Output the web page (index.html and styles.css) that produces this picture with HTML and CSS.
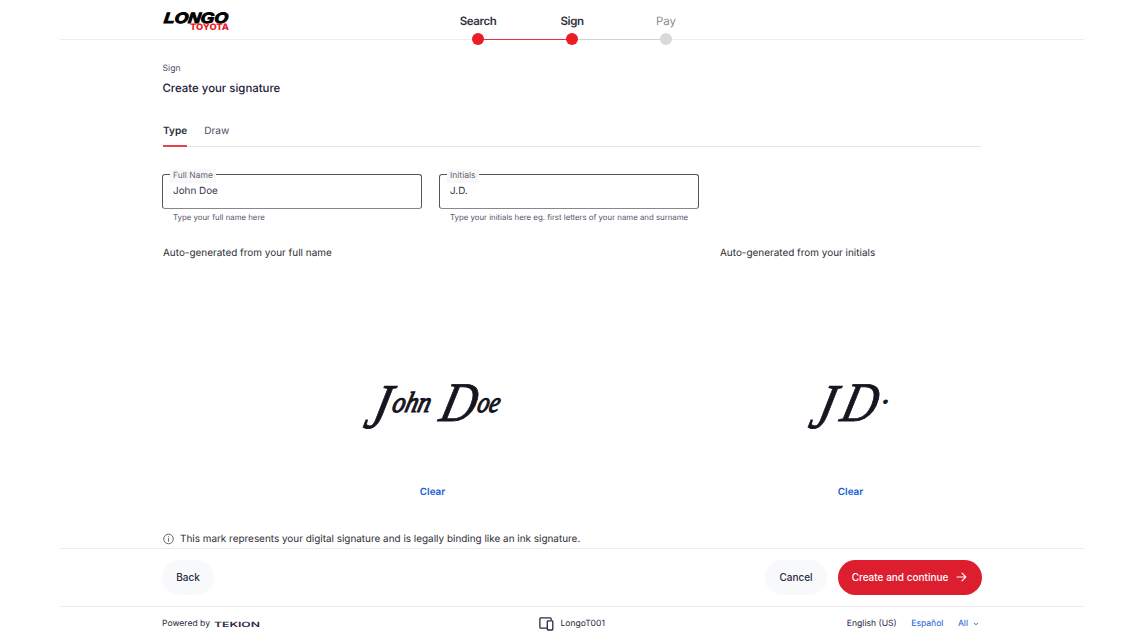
FILE: index.html
```html
<!DOCTYPE html>
<html lang="en">
<head>
<meta charset="utf-8">
<title>Create your signature</title>
<link rel="stylesheet" href="styles.css">
</head>
<body>
<div class="page">
  <header class="header">
    <svg class="brand" width="70" height="26" viewBox="0 -3 70 26" role="img" aria-label="Longo Toyota">
      <text class="brand-main" transform="translate(1.5 12.9) skewX(-6)" textLength="64" lengthAdjust="spacingAndGlyphs">LONGO</text>
      <text class="brand-sub" x="28" y="20.4" textLength="39" lengthAdjust="spacingAndGlyphs">TOYOTA</text>
    </svg>
    <ol class="steps">
      <li class="step done"><span>Search</span><i class="dot"></i></li>
      <li class="step current"><span>Sign</span><i class="dot"></i></li>
      <li class="step"><span>Pay</span><i class="dot"></i></li>
    </ol>
  </header>

  <main class="content">
    <div class="eyebrow">Sign</div>
    <h1 class="title">Create your signature</h1>
    <nav class="tabs"><a class="tab active">Type</a><a class="tab">Draw</a></nav>
    <div class="fields">
      <div class="field">
        <div class="box"><span class="label">Full Name</span><span class="value">John Doe</span></div>
        <div class="help">Type your full name here</div>
      </div>
      <div class="field">
        <div class="box"><span class="label">Initials</span><span class="value">J.D.</span></div>
        <div class="help">Type your initials here eg. first letters of your name and surname</div>
      </div>
    </div>
    <div class="previews">
      <section class="preview wide">
        <h2>Auto-generated from your full name</h2>
        <svg class="ink" width="150" height="66" viewBox="357 371 150 66">
          <g transform="translate(0 416) skewX(-14)">
            <text class="cap tall" x="364" y="12" textLength="23" lengthAdjust="spacingAndGlyphs">J</text>
            <text class="low" x="389" y="-4" textLength="38" lengthAdjust="spacingAndGlyphs">ohn</text>
            <text class="cap" x="438" y="5" textLength="35" lengthAdjust="spacingAndGlyphs">D</text>
            <text class="low" x="474" y="-4" textLength="22" lengthAdjust="spacingAndGlyphs">oe</text>
          </g>
        </svg>
        <a class="clear">Clear</a>
      </section>
      <section class="preview narrow">
        <h2>Auto-generated from your initials</h2>
        <svg class="ink" width="90" height="66" viewBox="805 371 90 66">
          <g transform="translate(0 416) skewX(-14)">
            <text class="cap tall" x="809" y="12" textLength="23" lengthAdjust="spacingAndGlyphs">J</text>
            <text class="cap" x="839" y="5" textLength="35" lengthAdjust="spacingAndGlyphs">D</text>
            <text class="low" x="878" y="-13">.</text>
          </g>
        </svg>
        <a class="clear">Clear</a>
      </section>
    </div>
    <div class="note">
      <svg width="12" height="12" viewBox="0 0 12 12" fill="none" stroke="#44444f" stroke-width=".8"><circle cx="6.5" cy="6" r="4.8"/><path d="M6.5 5.2v3.5M6.5 3.3v1"/></svg>
      <span>This mark represents your digital signature and is legally binding like an ink signature.</span>
    </div>
  </main>

  <div class="actions">
    <button class="btn back">Back</button>
    <button class="btn cancel">Cancel</button>
    <button class="btn primary"><span>Create and continue</span>
      <svg width="11" height="10" viewBox="0 0 11 10" fill="none" stroke="#fff" stroke-width="1.1" stroke-linecap="round" stroke-linejoin="round"><path d="M1 5h8.8M6 1.2 9.8 5 6 8.8"/></svg>
    </button>
  </div>

  <footer class="footer">
    <div class="powered"><span>Powered by</span>
      <svg width="47" height="8" viewBox="0 0 47 8" role="img" aria-label="Tekion"><text class="tekion" x="0" y="6.6" textLength="46" lengthAdjust="spacingAndGlyphs">TEKION</text></svg>
    </div>
    <div class="device">
      <svg width="15" height="14" viewBox="0 0 15 14" fill="none" stroke="#2b2944" stroke-width="1.3" stroke-linejoin="round"><path d="M8 11.2H1.9a1 1 0 0 1-1-1V1.9a1 1 0 0 1 1-1h9.3a1 1 0 0 1 1 1v1.3"/><rect x="8.3" y="3.8" width="5.5" height="9.2" rx=".8"/></svg>
      <span>LongoT001</span>
    </div>
    <div class="langs"><span>English (US)</span><a>Español</a><a class="all">All
      <svg width="6" height="4" viewBox="0 0 6 4" fill="none" stroke="#1860d8"><path d="m1 .8 2 2 2-2"/></svg></a></div>
  </footer>
</div>
</body>
</html>
```

FILE: styles.css
```css
* { box-sizing: border-box; }
body { margin: 0; background: #fff; color: #2b2944; font-family: Inter, "Liberation Sans", sans-serif; font-size: 10px; text-rendering: geometricPrecision; }
h1, h2, ol { margin: 0; padding: 0; font-weight: 400; }
svg { display: block; flex: none; overflow: visible; }
.page { width: 1024px; height: 640px; margin: 0 auto; display: flex; flex-direction: column; overflow: hidden; }

.header { height: 40px; flex: none; border-bottom: 1px solid #ededed; display: flex; padding-left: 102px; }
.brand { margin-top: 7px; }
.brand-main { font: italic 900 15px "Liberation Sans", Arial, sans-serif; fill: #000; stroke: #000; stroke-width: 1px; }
.brand-sub { font: 800 8.8px Inter, sans-serif; fill: #ed1b24; }
.steps { list-style: none; display: flex; margin-left: 199px; height: 46px; }
.step { width: 94px; display: flex; flex-direction: column; align-items: center; position: relative; font-size: 11.5px; line-height: 14px; letter-spacing: -.1px; padding-top: 14px; color: #8c8c93; }
.step.done, .step.current { color: #33323f; font-weight: 600; letter-spacing: -.4px; }
.dot { width: 12px; height: 12px; margin-top: 5px; border-radius: 50%; background: #d9d9d9; z-index: 1; }
.done .dot, .current .dot { background: #ed1b24; }
.done::after, .current::after { content: ""; position: absolute; left: 47px; top: 39px; width: 94px; height: 1px; background: #d0d2d3; }
.step.done::after { background: #e5333a; }

.content { height: 508px; flex: none; padding: 0 103px 0 102px; }
.eyebrow { margin-top: 23px; padding-left: .5px; font-size: 8.7px; line-height: 12px; color: #55536b; }
.title { margin-top: 5px; padding-left: .5px; font-size: 11.4px; line-height: 16px; font-weight: 500; color: #1e1b39; }
.tabs { margin: 22px 0 0 1px; height: 29px; display: flex; gap: 17px; border-bottom: 1px solid #e4e4e7; font-size: 10.1px; line-height: 26px; color: #4b5060; }
.tab { height: 29px; }
.tab.active { font-weight: 600; color: #2b2c3b; border-bottom: 2px solid #e5424c; }
.fields { display: flex; gap: 17px; margin-top: 27px; }
.field { width: 260px; }
.box { height: 35px; border: 1px solid #55555a; border-bottom-color: #88888c; border-radius: 3px; padding: 9px 10px; position: relative; }
.label { position: absolute; left: 7px; top: -6px; padding: 0 3px; background: #f8f8f8; font-size: 8.5px; line-height: 14px; color: #666674; white-space: nowrap; }
.value { font-size: 9.9px; line-height: 14px; color: #36344c; display: block; }
.help { margin: 2px 0 0 11px; font-size: 7.82px; line-height: 12px; color: #55536b; white-space: nowrap; }
.previews { display: flex; margin: 23px 0 0 1px; }
.preview { display: flex; flex-direction: column; align-items: center; }
.preview h2 { align-self: flex-start; font-size: 9.95px; line-height: 14px; color: #2d2d35; }
.wide { width: 557px; padding-right: 18px; }
.narrow { width: 261px; }
.ink { margin-top: 111px; }
.cap, .low { fill: #171620; stroke: #171620; font-family: "Liberation Serif", serif; font-style: italic; }
.cap { font-size: 56px; stroke-width: .9px; }
.cap.tall { font-size: 64px; }
.low { font-size: 29px; stroke-width: 1.2px; }
.clear { margin-top: 48px; font-size: 9.9px; line-height: 14px; font-weight: 600; color: #1860d8; }
.note { display: flex; align-items: center; gap: 6px; margin-top: 33px; font-size: 9.94px; line-height: 14px; color: #2d2d35; }

.actions { height: 58px; flex: none; border-top: 1px solid #ececee; padding: 11px 102px 0; display: flex; }
.btn { height: 35px; border: 0; border-radius: 18px; padding: 0 0 1px; font: 500 10px Inter, sans-serif; color: #2b2944; background: #f8f9fb; }
.back { width: 52px; margin-right: auto; }
.cancel { width: 62px; margin-right: 11px; }
.primary { width: 144px; background: #dc1e2f; color: #fff; display: flex; align-items: center; justify-content: center; gap: 8px; padding-right: 1px; }

.footer { height: 34px; flex: none; border-top: 1px solid #ececee; padding: 0 105px 0 102px; display: grid; grid-template-columns: 377px 1fr auto; align-items: center; font-size: 8.6px; line-height: 12px; }
.powered, .device, .langs, .all { display: flex; align-items: center; }
.powered { gap: 3.5px; }
.device { gap: 6.5px; }
.langs { gap: 14.5px; }
.langs a { color: #1860d8; }
.all { gap: 5px; }
.tekion { font: 600 7.2px Inter, sans-serif; fill: #2b2944; }
```
